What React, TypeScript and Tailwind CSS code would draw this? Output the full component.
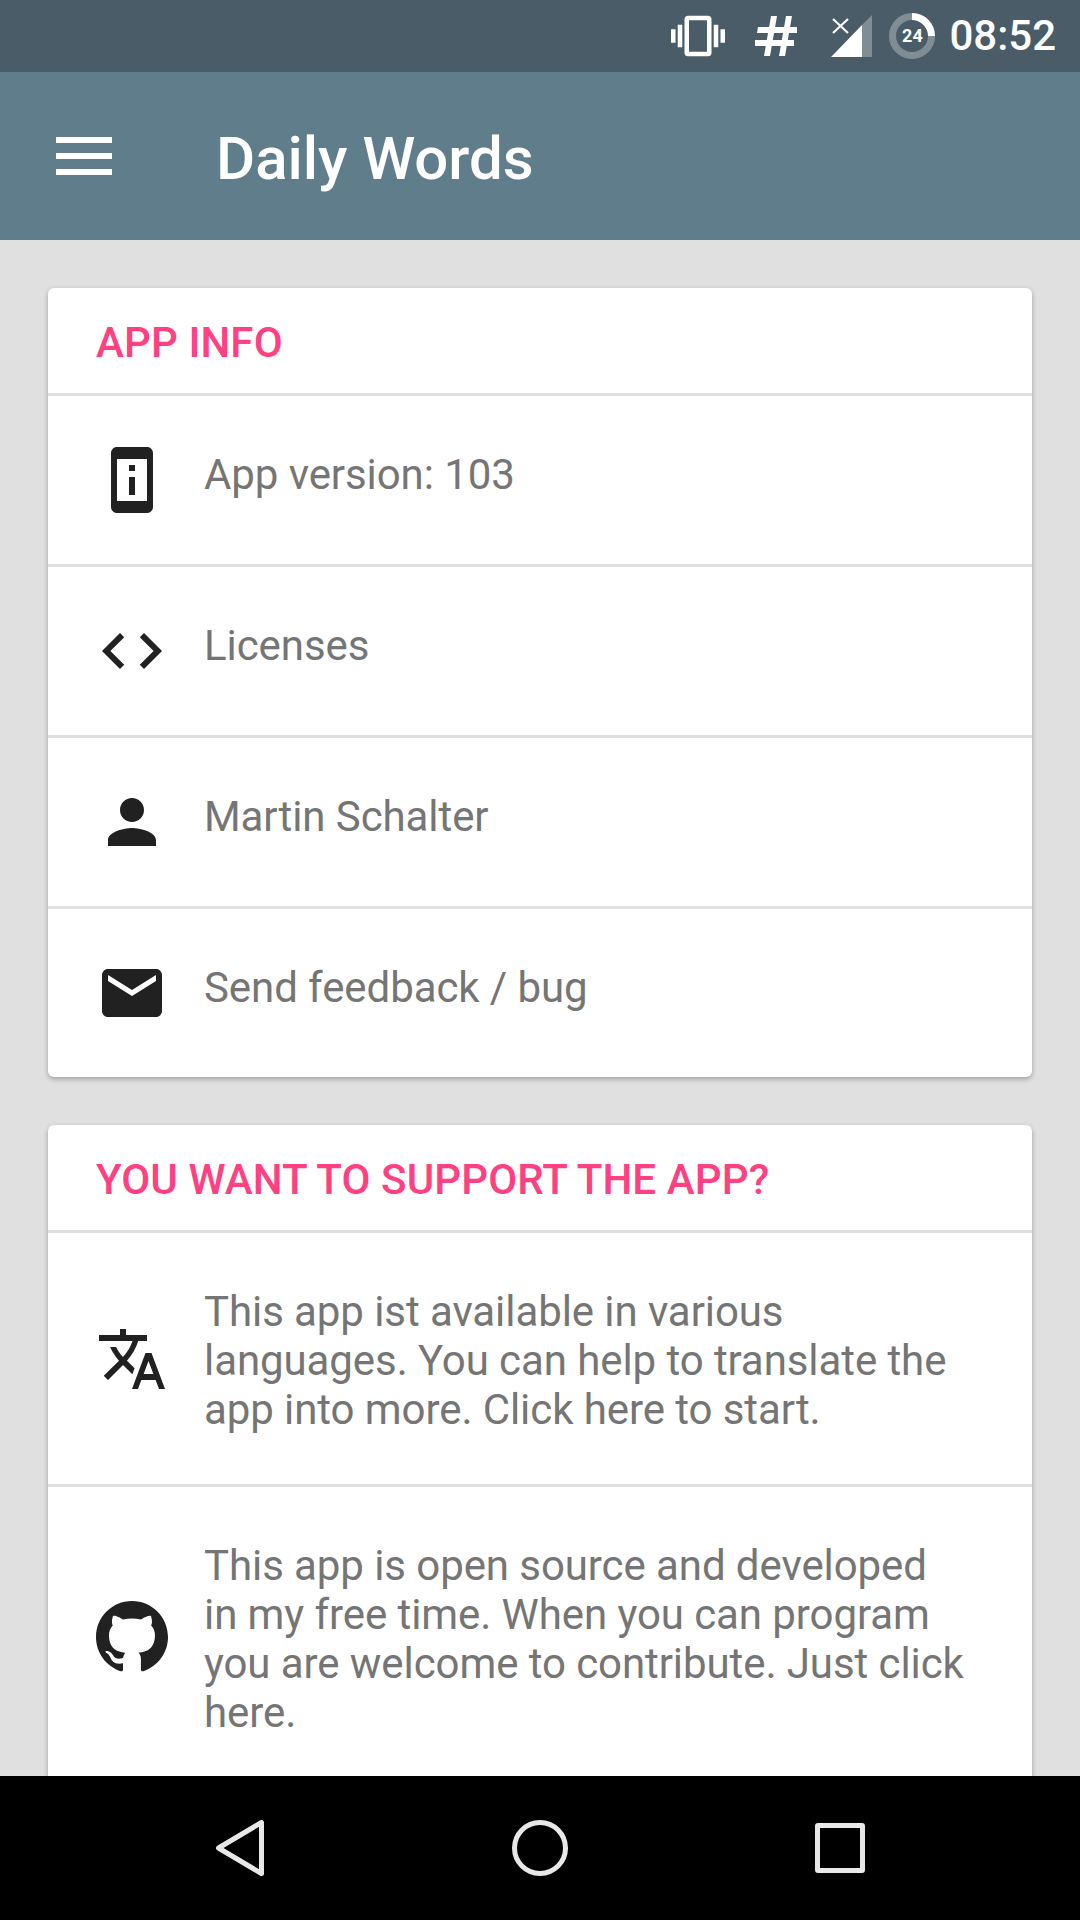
import React from "react";

const Icon = ({ d, className = "" }: { d: string; className?: string }) => (
  <svg viewBox="0 0 24 24" className={`w-[72px] h-[72px] shrink-0 fill-[#212121] ${className}`}>
    <path d={d} />
  </svg>
);

const P = {
  info: "M13 7h-2v2h2V7zm0 4h-2v6h2v-6zm4-9.99L7 1c-1.1 0-2 .9-2 2v18c0 1.1.9 2 2 2h10c1.1 0 2-.9 2-2V3c0-1.1-.9-1.99-2-1.99zM17 19H7V5h10v14z",
  code: "M9.4 16.6L4.8 12l4.6-4.6L8 6l-6 6 6 6 1.4-1.4zm5.2 0l4.6-4.6-4.6-4.6L16 6l6 6-6 6-1.4-1.4z",
  person: "M12 12c2.21 0 4-1.79 4-4s-1.79-4-4-4-4 1.79-4 4 1.79 4 4 4zm0 2c-2.67 0-8 1.34-8 4v2h16v-2c0-2.66-5.33-4-8-4z",
  mail: "M20 4H4c-1.1 0-1.99.9-1.99 2L2 18c0 1.1.9 2 2 2h16c1.1 0 2-.9 2-2V6c0-1.1-.9-2-2-2zm0 4l-8 5-8-5V6l8 5 8-5v2z",
  translate: "M12.87 15.07l-2.54-2.51.03-.03c1.74-1.94 2.98-4.17 3.71-6.53H17V4h-7V2H8v2H1v1.99h11.17C11.5 7.92 10.44 9.75 9 11.35 8.07 10.32 7.3 9.19 6.69 8h-2c.73 1.63 1.73 3.17 2.98 4.56l-5.09 5.02L4 19l5-5 3.11 3.11.76-2.04zM18.5 10h-2L12 22h2l1.12-3h4.75L21 22h2l-4.5-12zm-2.62 7l1.62-4.33L19.12 17h-3.24z",
  github: "M12 0C5.37 0 0 5.37 0 12c0 5.3 3.44 9.8 8.2 11.39.6.11.82-.26.82-.58 0-.29-.01-1.04-.02-2.04-3.34.72-4.04-1.61-4.04-1.61-.55-1.39-1.34-1.76-1.34-1.76-1.09-.74.08-.73.08-.73 1.2.08 1.84 1.24 1.84 1.24 1.07 1.84 2.81 1.31 3.5 1 .11-.78.42-1.31.76-1.61-2.67-.3-5.47-1.33-5.47-5.93 0-1.31.47-2.38 1.24-3.22-.12-.3-.54-1.52.12-3.18 0 0 1.01-.32 3.3 1.23.96-.27 1.98-.4 3-.4s2.04.14 3 .4c2.29-1.55 3.3-1.23 3.3-1.23.66 1.65.24 2.88.12 3.18.77.84 1.24 1.91 1.24 3.22 0 4.61-2.81 5.63-5.48 5.92.43.37.81 1.1.81 2.22 0 1.61-.01 2.9-.01 3.29 0 .32.22.7.82.58C20.57 21.8 24 17.3 24 12c0-6.63-5.37-12-12-12z",
};

const Row = ({ icon, children, last, multi }: { icon: string; children: React.ReactNode; last?: boolean; multi?: boolean }) => (
  <div className={`flex items-center pl-12 pr-16 ${multi ? "py-[50.5px]" : "py-12"} ${last ? "" : "border-b-[3px] border-[#e0e0e0]"}`}>
    <Icon d={icon} />
    <div className={`ml-9 text-[42px] leading-[49px] tracking-[-0.08px] text-[#757575] ${multi ? "pt-[3px]" : "pb-3"}`}>{children}</div>
  </div>
);

const CardHeader = ({ title }: { title: string }) => (
  <div className="h-[108px] border-b-[3px] border-[#e0e0e0] pl-12 pt-[3px] flex items-center">
    <span className="text-[42px] font-medium tracking-[0.13px] text-[#ff4081]">{title}</span>
  </div>
);

export default function App() {
  return (
    <div className="w-[1080px] h-[1920px] flex flex-col overflow-hidden bg-[#e0e0e0] font-['Roboto',sans-serif]">
      <div className="h-[72px] shrink-0 bg-[#4a5c68] flex items-center justify-end pr-6">
        <svg viewBox="0 0 24 24" className="w-[54px] h-[54px] fill-white">
          <path d="M0 15h2V9H0v6zm3 2h2V7H3v10zm19-8v6h2V9h-2zm-3 8h2V7h-2v10zM16.5 3h-9C6.67 3 6 3.67 6 4.5v15c0 .83.67 1.5 1.5 1.5h9c.83 0 1.5-.67 1.5-1.5v-15c0-.83-.67-1.5-1.5-1.5zM16 19H8V5h8v14z" />
        </svg>
        <svg viewBox="0 0 42 40" className="ml-[30px] w-[42px] h-[40px] fill-white">
          <path d="M16 0h6l-7 40H9zM31 0h6l-7 40h-6z" />
          <path d="M3 11h39v6H2zM0 24h39v6H-1z" />
        </svg>
        <svg viewBox="0 0 44 44" className="ml-[33px] w-[44px] h-[44px]">
          <path d="M32 11L42 1V43H32z" fill="#fff" fillOpacity="0.3" />
          <path d="M1 43L32 11V43z" fill="#fff" />
          <path d="M3 5L18 19M18 5L3 19" stroke="#fff" strokeWidth="2.2" />
        </svg>
        <div className="relative ml-[15px] w-[46px] h-[46px] flex items-center justify-center">
          <svg viewBox="0 0 46 46" className="absolute inset-0 w-[46px] h-[46px] fill-none">
            <circle cx="23" cy="23" r="19.5" stroke="#fff" strokeOpacity="0.3" strokeWidth="7" />
            <path d="M23 3.5A19.5 19.5 0 0 1 42.5 23" stroke="#fff" strokeWidth="7" />
          </svg>
          <span className="text-[18px] font-bold text-white leading-none">24</span>
        </div>
        <span className="ml-[14px] text-[42px] font-medium text-white leading-none">08:52</span>
      </div>

      <div className="h-[168px] shrink-0 bg-[#607d8b] flex items-center pl-[56px]">
        <div className="w-[56px] flex flex-col gap-[10px]">
          <div className="h-[6px] bg-white" />
          <div className="h-[6px] bg-white" />
          <div className="h-[6px] bg-white" />
        </div>
        <span className="ml-[104px] mt-[5px] text-[60px] font-medium text-white leading-none">Daily Words</span>
      </div>

      <div className="flex-1 min-h-0 overflow-hidden px-12 pt-12 flex flex-col gap-12">
        <div className="shrink-0 bg-white rounded-[6px] shadow-[0_2px_5px_rgba(0,0,0,0.3)]">
          <CardHeader title="APP INFO" />
          <Row icon={P.info}>App version: 103</Row>
          <Row icon={P.code}>Licenses</Row>
          <Row icon={P.person}>Martin Schalter</Row>
          <Row icon={P.mail} last>Send feedback / bug</Row>
        </div>
        <div className="shrink-0 bg-white rounded-[6px] shadow-[0_2px_5px_rgba(0,0,0,0.3)]">
          <CardHeader title="YOU WANT TO SUPPORT THE APP?" />
          <Row icon={P.translate} multi>
            This app ist available in various languages. You can help to translate the app into more. Click here to start.
          </Row>
          <Row icon={P.github} last multi>
            This app is open source and developed in my free time. When you can program you are welcome to contribute. Just click here.
          </Row>
        </div>
      </div>

      <div className="h-[144px] shrink-0 bg-black grid grid-cols-3 px-[90px] items-center">
        <div className="flex justify-center">
          <svg viewBox="0 0 48 56" className="w-[48px] h-[56px] fill-none stroke-[#e8e8e8]">
            <path d="M45.5 2.5V53.5L2.5 28z" strokeWidth="5" strokeLinejoin="round" />
          </svg>
        </div>
        <div className="flex justify-center">
          <div className="w-[56px] h-[56px] rounded-full border-[5px] border-[#e8e8e8]" />
        </div>
        <div className="flex justify-center">
          <div className="w-[50px] h-[50px] rounded-[3px] border-[5px] border-[#e8e8e8]" />
        </div>
      </div>
    </div>
  );
}
